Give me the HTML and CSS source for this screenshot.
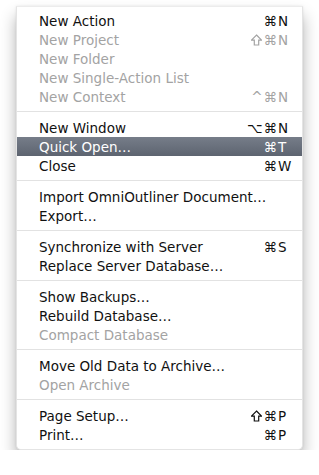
FILE: index.html
```html
<!DOCTYPE html>
<html lang="en">
<head>
    <meta charset="UTF-8">
    <title>File Menu</title>
    <link rel="stylesheet" href="styles.css">
</head>
<body>
    <div class="menu">
        <div class="item"><span class="label">New Action</span><span class="keys"><span class="mods">⌘</span><span class="key">N</span></span></div>
        <div class="item disabled"><span class="label">New Project</span><span class="keys"><span class="mods"><svg class="shift" viewBox="0 0 11 12"><path d="M5.5 1 L10.5 6.2 H7.7 V11 H3.3 V6.2 H0.5 Z"/></svg>⌘</span><span class="key">N</span></span></div>
        <div class="item disabled"><span class="label">New Folder</span></div>
        <div class="item disabled"><span class="label">New Single-Action List</span></div>
        <div class="item disabled"><span class="label">New Context</span><span class="keys"><span class="mods">^⌘</span><span class="key">N</span></span></div>
        <div class="separator"></div>
        <div class="item"><span class="label">New Window</span><span class="keys"><span class="mods">⌥⌘</span><span class="key">N</span></span></div>
        <div class="item selected"><span class="label">Quick Open…</span><span class="keys"><span class="mods">⌘</span><span class="key">T</span></span></div>
        <div class="item"><span class="label">Close</span><span class="keys"><span class="mods">⌘</span><span class="key">W</span></span></div>
        <div class="separator"></div>
        <div class="item"><span class="label">Import OmniOutliner Document…</span></div>
        <div class="item"><span class="label">Export…</span></div>
        <div class="separator"></div>
        <div class="item"><span class="label">Synchronize with Server</span><span class="keys"><span class="mods">⌘</span><span class="key">S</span></span></div>
        <div class="item"><span class="label">Replace Server Database…</span></div>
        <div class="separator"></div>
        <div class="item"><span class="label">Show Backups…</span></div>
        <div class="item"><span class="label">Rebuild Database…</span></div>
        <div class="item disabled"><span class="label">Compact Database</span></div>
        <div class="separator"></div>
        <div class="item"><span class="label">Move Old Data to Archive…</span></div>
        <div class="item disabled"><span class="label">Open Archive</span></div>
        <div class="separator"></div>
        <div class="item"><span class="label">Page Setup…</span><span class="keys"><span class="mods"><svg class="shift" viewBox="0 0 11 12"><path d="M5.5 1 L10.5 6.2 H7.7 V11 H3.3 V6.2 H0.5 Z"/></svg>⌘</span><span class="key">P</span></span></div>
        <div class="item"><span class="label">Print…</span><span class="keys"><span class="mods">⌘</span><span class="key">P</span></span></div>
    </div>
</body>
</html>
```

FILE: styles.css
```css
body {
    margin: 0;
    padding: 6px 0 0 16px;
    background: #fff;
    font-family: "DejaVu Sans", sans-serif;
    font-size: 13.5px;
    color: #111;
}
.menu {
    width: 287px;
    padding: 4px 0 5px;
    background: #fff;
    border: 1px solid #e4e4e4;
    border-top-color: #ececec;
    border-radius: 0 0 5px 5px;
    box-shadow: 0 10px 16px rgba(0,0,0,0.3), 0 0 3px rgba(0,0,0,0.08);
    box-sizing: border-box;
}
.item {
    display: flex;
    align-items: center;
    height: 19px;
    padding: 0 12px 0 22px;
}
.label {
    flex: 1;
    white-space: nowrap;
}
.keys {
    display: flex;
}
.mods {
    display: flex;
    align-items: center;
    letter-spacing: 1px;
}
.shift {
    width: 11px;
    height: 12px;
    margin-right: 2px;
    fill: none;
    stroke: currentColor;
    stroke-width: 1.2;
    stroke-linejoin: miter;
}
.key {
    width: 12px;
    text-align: left;
}
.disabled {
    color: #a3a3a3;
}
.selected {
    color: #fff;
    background: linear-gradient(#767d89, #5d6470);
}
.separator {
    height: 1px;
    margin: 5px 0 6px;
    background: #e2e2e2;
}
```
